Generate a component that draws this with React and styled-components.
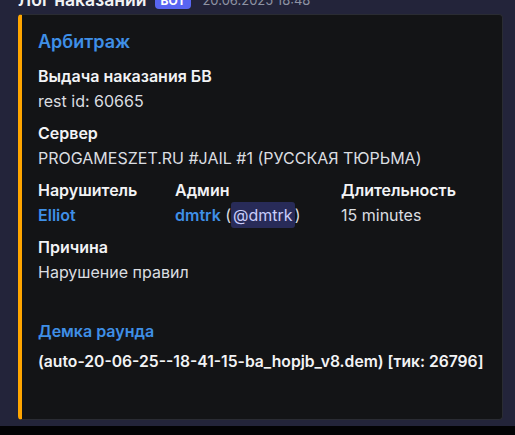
import React from "react";
import styled, { createGlobalStyle } from "styled-components";

const Global = createGlobalStyle`
  html, body { margin: 0; padding: 0; background: #030305; }
  body { overflow: hidden; font-family: Inter, "Noto Sans", sans-serif; }
`;

const Page = styled.div`
  background: #23243a;
  height: 426px;
  padding: 0 12px 0 18px;
  box-sizing: border-box;
  overflow: hidden;
`;

const Header = styled.div`
  margin-top: -11px;
  height: 22px;
  display: flex;
  align-items: center;
  gap: 6px;
`;

const Author = styled.span`
  font-size: 17.6px;
  font-weight: 600;
  color: #f2f3f5;
  line-height: 22px;
`;

const Badge = styled.span`
  background: #5865f2;
  color: #fff;
  font-size: 12px;
  font-weight: 700;
  height: 17px;
  line-height: 17px;
  padding: 0 6px;
  border-radius: 4px;
  margin-left: 2px;
`;

const Stamp = styled.span`
  font-size: 13px;
  color: #8e93a3;
  margin-left: 5px;
`;

const Embed = styled.div`
  margin-top: 3px;
  width: 485px;
  box-sizing: border-box;
  background: #131416;
  border: 1px solid #2a2c33;
  border-left: 4px solid #ffa500;
  border-radius: 4px;
  padding: 16px 16px 46px 16px;
`;

const Title = styled.div`
  font-size: 18px;
  font-weight: 600;
  line-height: 22px;
  color: #3f8fe6;
`;

const Fields = styled.div`
  margin-top: 12px;
  display: grid;
  grid-template-columns: 137px 166px 1fr;
  row-gap: 10px;
`;

const Field = styled.div`
  grid-column: ${(p) => (p.$inline ? "auto" : "1 / -1")};
`;

const Name = styled.div`
  font-size: 16px;
  font-weight: 600;
  line-height: 22px;
  color: ${(p) => (p.$link ? "#3f8fe6" : "#f2f3f5")};
`;

const Value = styled.div`
  margin-top: ${(p) => p.$gap ?? 3}px;
  font-size: ${(p) => (p.$bold ? 15.7 : 16)}px;
  font-weight: ${(p) => (p.$bold ? 600 : 400)};
  line-height: 22px;
  color: ${(p) => (p.$bold ? "#f2f3f5" : "#dbdee1")};
  white-space: nowrap;
`;

const Link = styled.span`
  color: #3f8fe6;
  font-weight: 600;
`;

const Mention = styled.span`
  background: rgba(88, 101, 242, 0.3);
  color: #c9cdfb;
  border-radius: 3px;
  padding: 3px 2px;
`;

const Demo = styled.div`
  grid-column: 1 / -1;
  margin-top: 27px;
`;

export default function App() {
  return (
    <>
      <Global />
      <Page>
        <Header>
          <Author>Лог наказаний</Author>
          <Badge>BOT</Badge>
          <Stamp>20.06.2025 18:48</Stamp>
        </Header>
        <Embed>
          <Title>Арбитраж</Title>
          <Fields>
            <Field>
              <Name>Выдача наказания БВ</Name>
              <Value>rest id: 60665</Value>
            </Field>
            <Field>
              <Name>Сервер</Name>
              <Value>PROGAMESZET.RU #JAIL #1 (РУССКАЯ ТЮРЬМА)</Value>
            </Field>
            <Field $inline>
              <Name>Нарушитель</Name>
              <Value><Link>Elliot</Link></Value>
            </Field>
            <Field $inline>
              <Name>Админ</Name>
              <Value>
                <Link>dmtrk</Link> (<Mention>@dmtrk</Mention>)
              </Value>
            </Field>
            <Field $inline>
              <Name>Длительность</Name>
              <Value>15 minutes</Value>
            </Field>
            <Field>
              <Name>Причина</Name>
              <Value>Нарушение правил</Value>
            </Field>
            <Demo>
              <Name $link>Демка раунда</Name>
              <Value $bold $gap={9}>
                (auto-20-06-25--18-41-15-ba_hopjb_v8.dem) [тик: 26796]
              </Value>
            </Demo>
          </Fields>
        </Embed>
      </Page>
    </>
  );
}
